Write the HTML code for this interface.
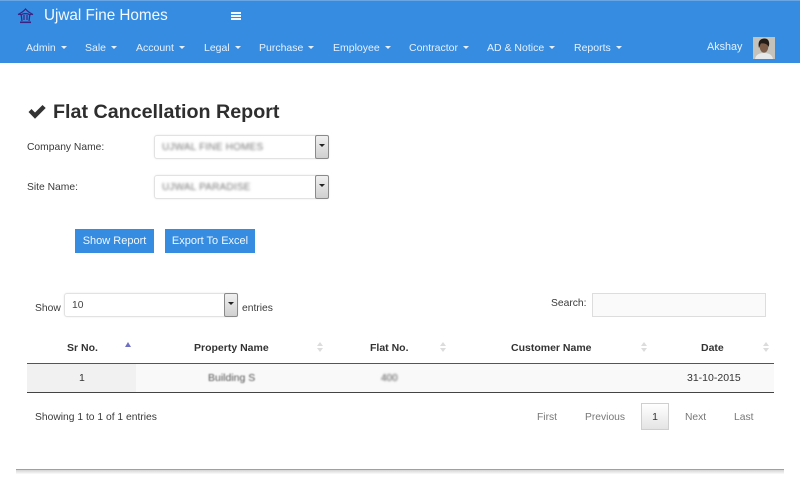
<!DOCTYPE html>
<html lang="en">
<head>
<meta charset="utf-8">
<title>Flat Cancellation Report</title>
<style>
html,body{margin:0;padding:0;background:#fff;}
body{position:relative;width:800px;height:497px;overflow:hidden;font-family:"Liberation Sans",sans-serif;color:#333;}
.a{position:absolute;white-space:nowrap;}
#nav{left:0;top:0;width:800px;height:63px;background:#368ce0;border-top:1px solid #6ba6e4;box-sizing:border-box;}
.n{top:42px;font-size:10.5px;line-height:13px;color:#e6f1fc;}
.n i{display:inline-block;width:0;height:0;border-left:3px solid transparent;border-right:3px solid transparent;border-top:3px solid #e6f1fc;margin-left:5px;vertical-align:2px;}
.l{font-size:10.3px;line-height:13px;color:#3a3a3a;}
.sel{background:#fff;border:1px solid #e2e2e2;border-radius:3px;box-sizing:border-box;box-shadow:0 0 2px #ececec;}
.arr{position:absolute;right:-1px;top:-1px;bottom:-1px;width:14px;background:linear-gradient(#f0f0f0,#d0d0d0);border:1px solid #8a8a8a;border-radius:2px;box-sizing:border-box;}
.arr:after{content:"";position:absolute;left:3px;top:38%;border-left:3px solid transparent;border-right:3px solid transparent;border-top:3px solid #222;}
.bl{font-size:10px;line-height:13px;color:#777;filter:blur(1.4px);letter-spacing:.2px;}
.btn{background:#368ce0;color:#f2f8fe;font-size:11px;line-height:24px;height:24px;text-align:center;}
.th{top:342px;font-size:10.5px;line-height:13px;font-weight:bold;color:#333;}
.s{width:6px;height:11px;top:342px;}
.s:before,.s:after{content:"";position:absolute;left:0;border-left:3px solid transparent;border-right:3px solid transparent;}
.s:before{top:0;border-bottom:4px solid #dcdcdc;}
.s:after{top:6px;border-top:4px solid #dcdcdc;}
.p{top:411px;font-size:10.3px;line-height:13px;color:#777;}
.b{width:10px;height:2px;background:#f4f9fe;left:231px;}
</style>
</head>
<body>
<div class="a" id="nav"></div>

<svg class="a" style="left:17px;top:8px" width="17" height="16" viewBox="0 0 17 16" fill="none" stroke="#3a2384" stroke-width="1.2">
<path d="M1 6.5 C4 5 6.5 3.5 8.5 1 C10.5 3.5 13 5 16 6.5 C14.5 6 13.5 6.2 12.8 7 L12 13 M4.2 7 L5 13 M1 6.5 C2.5 6 3.5 6.2 4.2 7 C6 5.2 11 5.2 12.8 7"/>
<path d="M7 7 L7 12 M10 7 L10 12"/>
<path d="M3 14.3 H14" stroke-width="1.6"/>
</svg>
<div class="a" style="left:44px;top:7px;font-size:15.25px;line-height:18px;color:#f4f9fe;">Ujwal Fine Homes</div>
<div class="a b" style="top:12px"></div>
<div class="a b" style="top:15px"></div>
<div class="a b" style="top:18px"></div>

<div class="a n" style="left:26px">Admin<i></i></div>
<div class="a n" style="left:85px">Sale<i></i></div>
<div class="a n" style="left:136px">Account<i></i></div>
<div class="a n" style="left:204px">Legal<i></i></div>
<div class="a n" style="left:259px">Purchase<i></i></div>
<div class="a n" style="left:333px">Employee<i></i></div>
<div class="a n" style="left:409px">Contractor<i></i></div>
<div class="a n" style="left:487px">AD &amp; Notice<i></i></div>
<div class="a n" style="left:574px">Reports<i></i></div>
<div class="a n" style="left:707px;top:41px;font-size:10.8px">Akshay</div>

<svg class="a" style="left:753px;top:37px" width="22" height="22" viewBox="0 0 22 22">
<rect width="22" height="22" fill="#c4c2ba"/>
<path d="M2 22 C3 17 7 16 11 16 C15 16 19 17 20 22Z" fill="#e6e8ea"/>
<ellipse cx="11" cy="10" rx="4.3" ry="5.6" fill="#7d5c4a"/>
<path d="M6 11 C4 3 9 1.5 11.5 1.5 C16 1.5 17 6 15.6 10 C14.5 6.5 10 6 8 6.5 C7 7.5 7 9 6 11Z" fill="#241c19"/>
</svg>

<svg class="a" style="left:28px;top:103px" width="19" height="16" viewBox="0 0 19 16">
<path d="M0.5 9 L3.5 6 L7 9.5 L14.5 2 L17.7 5 L7 15.7Z" fill="#333"/>
</svg>
<div class="a" style="left:53px;top:100px;font-size:19.7px;line-height:24px;font-weight:bold;color:#2e2e2e;">Flat Cancellation Report</div>

<div class="a l" style="left:27px;top:141px">Company Name:</div>
<div class="a sel" style="left:154px;top:135px;width:175px;height:24px;">
  <div class="a bl" style="left:7px;top:5px">UJWAL FINE HOMES</div>
  <div class="arr"></div>
</div>
<div class="a l" style="left:27px;top:181px">Site Name:</div>
<div class="a sel" style="left:154px;top:175px;width:175px;height:24px;">
  <div class="a bl" style="left:7px;top:5px">UJWAL PARADISE</div>
  <div class="arr"></div>
</div>

<div class="a btn" style="left:75px;top:229px;width:79px;">Show Report</div>
<div class="a btn" style="left:165px;top:229px;width:90px;">Export To Excel</div>

<div class="a l" style="left:35px;top:302px">Show</div>
<div class="a sel" style="left:64px;top:293px;width:174px;height:24px;">
  <div class="a" style="left:7px;top:5px;font-size:10.3px;line-height:13px;color:#444">10</div>
  <div class="arr"></div>
</div>
<div class="a l" style="left:242px;top:302px">entries</div>

<div class="a l" style="left:551px;top:297px">Search:</div>
<div class="a" style="left:592px;top:293px;width:174px;height:24px;box-sizing:border-box;border:1px solid #ddd;background:#fafafa;"></div>

<div class="a th" style="left:67px">Sr No.</div>
<div class="a" style="left:125px;top:342px;border-left:3px solid transparent;border-right:3px solid transparent;border-bottom:5px solid #6f6fc4;"></div>
<div class="a th" style="left:194px">Property Name</div>
<div class="a s" style="left:317px"></div>
<div class="a th" style="left:370px">Flat No.</div>
<div class="a s" style="left:440px"></div>
<div class="a th" style="left:511px">Customer Name</div>
<div class="a s" style="left:641px"></div>
<div class="a th" style="left:701px">Date</div>
<div class="a s" style="left:763px"></div>

<div class="a" style="left:27px;top:363px;width:747px;height:30px;box-sizing:border-box;border-top:1px solid #555;border-bottom:1px solid #444;background:#f9f9f9;"></div>
<div class="a" style="left:27px;top:364px;width:109px;height:28px;background:#f1f1f1;"></div>
<div class="a l" style="left:79px;top:372px;font-size:10.5px;color:#333">1</div>
<div class="a" style="left:208px;top:372px;font-size:10.5px;line-height:13px;color:#555;filter:blur(.8px);">Building S</div>
<div class="a" style="left:381px;top:372px;font-size:10px;line-height:13px;color:#555;filter:blur(1.1px);">400</div>
<div class="a l" style="left:687px;top:372px;font-size:10.5px;color:#333">31-10-2015</div>

<div class="a l" style="left:35px;top:411px">Showing 1 to 1 of 1 entries</div>

<div class="a p" style="left:537px">First</div>
<div class="a p" style="left:585px">Previous</div>
<div class="a" style="left:641px;top:403px;width:28px;height:27px;box-sizing:border-box;border:1px solid #cfcfcf;background:linear-gradient(#fff,#e4e4e4);text-align:center;font-size:10.5px;line-height:26px;color:#333;">1</div>
<div class="a p" style="left:685px">Next</div>
<div class="a p" style="left:734px">Last</div>

<div class="a" style="left:16px;top:469px;width:768px;height:1px;background:#a0a0a0;"></div>
<div class="a" style="left:16px;top:470px;width:768px;height:4px;background:linear-gradient(#d4d4d4,#fbfbfb);"></div>
</body>
</html>
